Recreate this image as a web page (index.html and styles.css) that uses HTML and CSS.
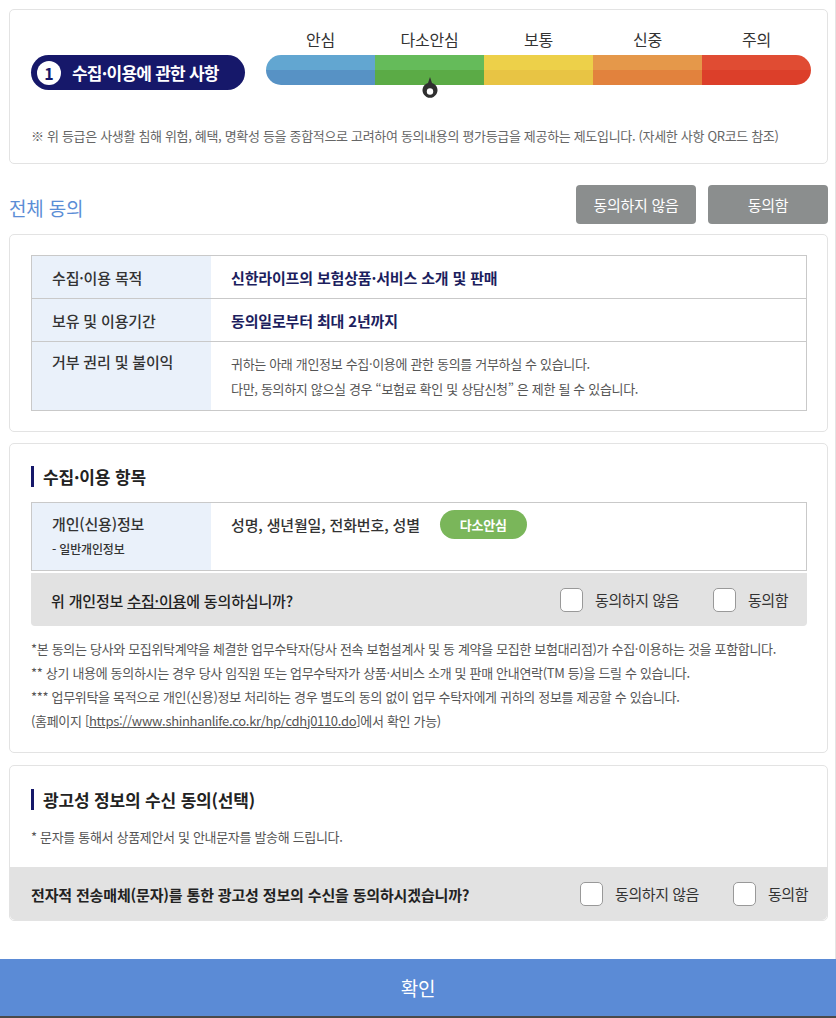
FILE: index.html
```html
<!DOCTYPE html>
<html lang="ko">
<head>
<meta charset="utf-8">
<title>개인정보 동의</title>
<link rel="stylesheet" href="styles.css">
</head>
<body>
<div class="page">
  <section class="card grade-card">
    <div class="grade-top">
      <div class="badge"><span class="num">1</span><span>수집·이용에 관한 사항</span></div>
      <div class="scale">
        <div class="scale-labels">
          <span>안심</span><span>다소안심</span><span>보통</span><span>신중</span><span>주의</span>
        </div>
        <div class="bar">
          <span class="seg s1"></span><span class="seg s2"></span><span class="seg s3"></span><span class="seg s4"></span><span class="seg s5"></span>
          <svg class="pin" width="18" height="24" viewBox="0 0 18 24"><path d="M9 0 L11 6 A7.5 7.5 0 1 1 7 6 Z" fill="#2f2f2f"/><circle cx="9" cy="14.5" r="3.2" fill="#fff"/></svg>
        </div>
      </div>
    </div>
    <p class="grade-note">※ 위 등급은 사생활 침해 위험, 혜택, 명확성 등을 종합적으로 고려하여 동의내용의 평가등급을 제공하는 제도입니다. (자세한 사항 QR코드 참조)</p>
  </section>

  <div class="all-row">
    <h2 class="all-title">전체 동의</h2>
    <div class="all-btns">
      <button class="gbtn">동의하지 않음</button>
      <button class="gbtn">동의함</button>
    </div>
  </div>

  <section class="card pad">
    <div class="tbl">
      <div class="tr">
        <div class="th">수집·이용 목적</div>
        <div class="td strong">신한라이프의 보험상품·서비스 소개 및 판매</div>
      </div>
      <div class="tr">
        <div class="th">보유 및 이용기간</div>
        <div class="td strong">동의일로부터 최대 2년까지</div>
      </div>
      <div class="tr tall">
        <div class="th">거부 권리 및 불이익</div>
        <div class="td small">
          <p>귀하는 아래 개인정보 수집·이용에 관한 동의를 거부하실 수 있습니다.</p>
          <p>다만, 동의하지 않으실 경우 “보험료 확인 및 상담신청” 은 제한 될 수 있습니다.</p>
        </div>
      </div>
    </div>
  </section>

  <section class="card pad items">
    <h3 class="sec-title">수집·이용 항목</h3>
    <div class="tbl">
      <div class="tr item-row">
        <div class="th">
          <p>개인(신용)정보</p>
          <p class="sub">- 일반개인정보</p>
        </div>
        <div class="td item-td"><span>성명, 생년월일, 전화번호, 성별</span><span class="chip">다소안심</span></div>
      </div>
    </div>
    <div class="ask ask-inner">
      <p class="ask-q">위 개인정보 <u>수집·이용</u>에 동의하십니까?</p>
      <div class="checks">
        <label class="chk"><span class="box"></span>동의하지 않음</label>
        <label class="chk"><span class="box"></span>동의함</label>
      </div>
    </div>
    <div class="notes">
      <p>*본 동의는 당사와 모집위탁계약을 체결한 업무수탁자(당사 전속 보험설계사 및 동 계약을 모집한 보험대리점)가 수집·이용하는 것을 포함합니다.</p>
      <p>** 상기 내용에 동의하시는 경우 당사 임직원 또는 업무수탁자가 상품·서비스 소개 및 판매 안내연락(TM 등)을 드릴 수 있습니다.</p>
      <p>*** 업무위탁을 목적으로 개인(신용)정보 처리하는 경우 별도의 동의 없이 업무 수탁자에게 귀하의 정보를 제공할 수 있습니다.</p>
      <p>(홈페이지 [<u>https://www.shinhanlife.co.kr/hp/cdhj0110.do</u>]에서 확인 가능)</p>
    </div>
  </section>

  <section class="card ad">
    <div class="ad-head">
      <h3 class="sec-title">광고성 정보의 수신 동의(선택)</h3>
      <p class="ad-note">* 문자를 통해서 상품제안서 및 안내문자를 발송해 드립니다.</p>
    </div>
    <div class="ask ask-full">
      <p class="ask-q">전자적 전송매체(문자)를 통한 광고성 정보의 수신을 동의하시겠습니까?</p>
      <div class="checks">
        <label class="chk"><span class="box"></span>동의하지 않음</label>
        <label class="chk"><span class="box"></span>동의함</label>
      </div>
    </div>
  </section>
</div>
<footer class="confirm">확인</footer>
</body>
</html>
```

FILE: styles.css
```css
* { box-sizing: border-box; margin: 0; padding: 0; }
html, body { background: #fff; }
body {
  font-family: "Noto Sans CJK KR", "Noto Sans", sans-serif;
  color: #333;
  letter-spacing: -0.01em;
  width: 836px;
  height: 1018px;
  overflow: hidden;
}
.page {
  padding: 9px 7px 0 9px;
  border-right: 1px solid #e4e4e4;
  width: 836px;
  height: 959px;
}
.card {
  border: 1px solid #e3e3e3;
  border-radius: 5px;
  background: #fff;
}
.grade-card { padding: 20px 16px 22px 21px; height: 155px; }
.grade-top { display: flex; gap: 21px; }
.badge {
  margin-top: 25px;
  width: 214px;
  height: 35px;
  border-radius: 18px;
  background: #16186a;
  color: #fff;
  display: flex;
  align-items: center;
  gap: 11px;
  padding-left: 6px;
  font-size: 17px;
  font-weight: 700;
  letter-spacing: -0.045em;
}
.badge .num {
  width: 24px; height: 24px; border-radius: 50%;
  background: #fff; color: #16186a;
  display: flex; align-items: center; justify-content: center;
  font-size: 16px; letter-spacing: 0;
}
.scale { width: 545px; }
.scale-labels { display: flex; height: 25px; }
.scale-labels span { flex: 1; text-align: center; font-size: 16px; line-height: 19px; color: #333; }
.bar { display: flex; height: 30px; position: relative; }
.seg { flex: 1; }
.s1 { background: linear-gradient(#62a6d1 50%, #5792c5 50%); border-radius: 15px 0 0 15px; }
.s2 { background: linear-gradient(#65bb5a 50%, #5bab46 50%); }
.s3 { background: linear-gradient(#edd049 50%, #e8c444 50%); }
.s4 { background: linear-gradient(#e5984a 50%, #e2823d 50%); }
.s5 { background: linear-gradient(#e04c33 50%, #dc3f2a 50%); border-radius: 0 15px 15px 0; }
.pin { position: absolute; left: 155px; top: 22px; }
.grade-note { margin-top: 36px; font-size: 13px; line-height: 20px; color: #666; letter-spacing: -0.025em; }

.all-row { display: flex; justify-content: space-between; align-items: center; margin-top: 21px; height: 39px; }
.all-title { font-size: 19px; font-weight: 400; color: #5b8dd6; padding-top: 6px; }
.all-btns { display: flex; gap: 12px; }
.gbtn {
  width: 120px; height: 39px; border: 0; border-radius: 4px;
  background: #8b8e8e; color: #fff;
  font-family: inherit; font-size: 15px; letter-spacing: -0.02em;
}

.pad { padding: 20px 20px 20px 21px; margin-top: 10px; }
.tbl { border: 1px solid #c9c9c9; border-bottom: 0; }
.tr { display: flex; border-bottom: 1px solid #c9c9c9; min-height: 43px; }
.th {
  width: 179px; flex: none; background: #eaf1fa;
  padding: 0 0 0 20px; display: flex; align-items: center;
  font-size: 15px; font-weight: 500; color: #333;
}
.td { padding: 0 0 0 20px; display: flex; align-items: center; font-size: 15px; }
.td.strong { font-weight: 700; color: #1c1e5e; }
.tall { min-height: 69px; }
.tall .th { align-items: flex-start; padding-top: 9px; }
.td.small { flex-direction: column; align-items: flex-start; justify-content: flex-start; padding-top: 9px; font-size: 13px; line-height: 25px; color: #555; letter-spacing: -0.025em; }

.items { margin-top: 11px; padding-top: 22px; padding-bottom: 19px; }
.sec-title {
  font-size: 17px; font-weight: 700; color: #222;
  border-left: 3px solid #16186a;
  padding-left: 9px; line-height: 21px;
}
.items .tbl { margin-top: 15px; }
.item-row { min-height: 68px; }
.item-row .th { flex-direction: column; align-items: flex-start; justify-content: flex-start; padding-top: 9px; }
.item-row .th p { line-height: 24px; }
.item-row .th .sub { font-size: 12px; line-height: 26px; }
.item-td { align-items: flex-start; padding-top: 7px; gap: 20px; font-weight: 500; }
.item-td > span:first-child { line-height: 29px; }
.chip {
  width: 87px; height: 29px; border-radius: 15px;
  background: #7ab65a; color: #fff; font-size: 13px; font-weight: 700;
  display: flex; align-items: center; justify-content: center;
}
.ask {
  display: flex; justify-content: space-between; align-items: center;
  background: #e2e2e2; height: 53px;
}
.ask-inner { margin-top: 2px; padding: 0 19px 0 20px; border-radius: 0 0 4px 4px; }
.ask-q { font-size: 15px; font-weight: 500; color: #222; padding-top: 2px; }
.checks { display: flex; gap: 34px; }
.chk { display: flex; align-items: center; gap: 12px; font-size: 15px; color: #333; letter-spacing: -0.03em; }
.box { width: 23px; height: 24px; background: #fff; border: 1px solid #999; border-radius: 5px; }
.notes { margin-top: 11px; font-size: 13px; line-height: 24px; color: #555; letter-spacing: -0.025em; }

.ad { margin-top: 12px; }
.ad-head { padding: 23px 20px 0 21px; height: 101px; }
.ad-note { margin-top: 17px; font-size: 13px; color: #555; letter-spacing: -0.025em; }
.ask-full { padding: 0 19px 0 21px; border-radius: 0 0 5px 5px; }
.ask-full .ask-q { font-weight: 700; }

.confirm {
  height: 59px; background: #5b8bd6; color: #fff;
  border-bottom: 2px solid #4a4a4a;
  display: flex; align-items: center; justify-content: center;
  font-size: 19px; padding-top: 0;
}
```
